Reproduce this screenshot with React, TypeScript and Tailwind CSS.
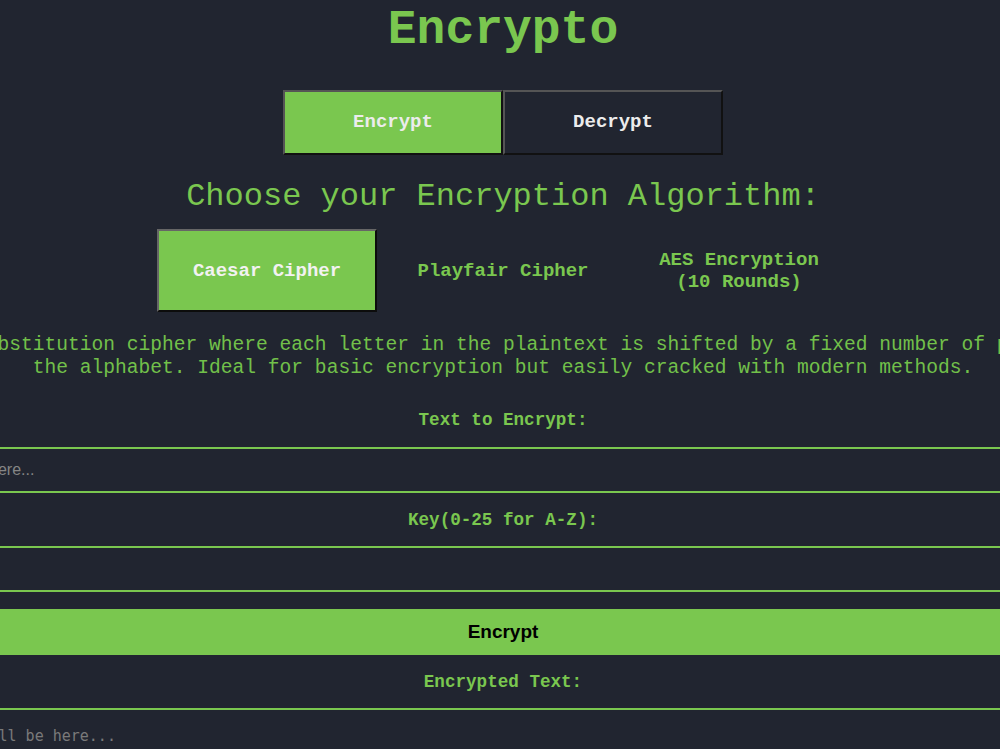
import { useState } from 'react';

type Mode = 'encrypt' | 'decrypt';
type Algo = 'caesar' | 'playfair' | 'aes';

const algos: { id: Algo; label: string[] }[] = [
  { id: 'caesar', label: ['Caesar Cipher'] },
  { id: 'playfair', label: ['Playfair Cipher'] },
  { id: 'aes', label: ['AES Encryption', '(10 Rounds)'] },
];

export default function App() {
  const [mode, setMode] = useState<Mode>('encrypt');
  const [algo, setAlgo] = useState<Algo>('caesar');
  const [text, setText] = useState('');
  const [key, setKey] = useState('');

  return (
    <div className="h-screen w-full overflow-hidden bg-[#212530] flex items-start justify-center font-['Liberation_Mono','Courier_New',monospace]">
      <div className="ml-[6px] w-[1340px] shrink-0 flex flex-col items-center">
        <h1 className="mt-[3px] text-[48px] leading-[54px] font-bold text-[#7ac74f]">Encrypto</h1>

        <div className="mt-[33px] flex">
          <button
            onClick={() => setMode('encrypt')}
            className={`w-[220px] h-[65px] border-2 border-t-[#555] border-l-[#555] border-b-[#111] border-r-[#111] text-[19px] font-bold text-[#ececec] ${mode === 'encrypt' ? 'bg-[#7ac74f]' : 'bg-transparent'}`}
          >
            Encrypt
          </button>
          <button
            onClick={() => setMode('decrypt')}
            className={`w-[220px] h-[65px] border-2 border-t-[#555] border-l-[#555] border-b-[#111] border-r-[#111] text-[19px] font-bold text-[#ececec] ${mode === 'decrypt' ? 'bg-[#7ac74f]' : 'bg-transparent'}`}
          >
            Decrypt
          </button>
        </div>

        <h2 className="mt-[24px] text-[32px] leading-[36px] text-[#7ac74f]">Choose your Encryption Algorithm:</h2>

        <div className="mt-[14px] flex gap-4">
          {algos.map((a) => (
            <button
              key={a.id}
              onClick={() => setAlgo(a.id)}
              className={`w-[220px] h-[83px] flex flex-col items-center justify-center text-[19px] leading-[22px] font-bold ${
                algo === a.id
                  ? 'bg-[#7ac74f] text-[#f2f2f2] border-2 border-t-[#666] border-l-[#666] border-b-[#0c0c0c] border-r-[#0c0c0c]'
                  : 'bg-transparent text-[#7ac74f] border-2 border-transparent'
              }`}
            >
              {a.label.map((l) => (
                <span key={l}>{l}</span>
              ))}
            </button>
          ))}
        </div>

        <p className="mt-[22px] w-[1290px] text-center text-[19.6px] leading-[23px] text-[#72c04a]">
          A simple substitution cipher where each letter in the plaintext is shifted by a fixed number of positions in the alphabet. Ideal for basic encryption but easily cracked with modern methods.
        </p>

        <label className="mt-[30px] text-[17.6px] leading-[20px] font-bold text-[#7ac74f]">Text to Encrypt:</label>
        <input
          value={text}
          onChange={(e) => setText(e.target.value)}
          placeholder="Type your message here..."
          className="mt-[17px] w-full h-[46px] shrink-0 border-2 border-[#7ac74f] bg-transparent px-[10px] font-['Liberation_Sans',Arial,sans-serif] text-base text-white outline-none placeholder:text-[#858585]"
        />

        <label className="mt-[17px] text-[17.6px] leading-[20px] font-bold text-[#7ac74f]">Key(0-25 for A-Z):</label>
        <input
          value={key}
          onChange={(e) => setKey(e.target.value)}
          className="mt-[16px] w-full h-[46px] shrink-0 border-2 border-[#7ac74f] bg-transparent px-[10px] font-['Liberation_Sans',Arial,sans-serif] text-base text-white outline-none"
        />

        <button className="mt-[17px] w-full h-[46px] shrink-0 bg-[#7ac74f] font-['Liberation_Sans',Arial,sans-serif] text-[19px] font-bold text-black">
          Encrypt
        </button>

        <label className="mt-[17px] text-[17.6px] leading-[20px] font-bold text-[#7ac74f]">Encrypted Text:</label>
        <textarea
          readOnly
          placeholder="Encrypted text will be here..."
          className="mt-[16px] w-full h-[120px] shrink-0 border-2 border-[#7ac74f] bg-transparent px-[10px] pt-[15px] font-['DejaVu_Sans_Mono',monospace] text-[15px] text-white outline-none resize-none placeholder:text-[#7a7a7a]"
        />
      </div>
    </div>
  );
}
